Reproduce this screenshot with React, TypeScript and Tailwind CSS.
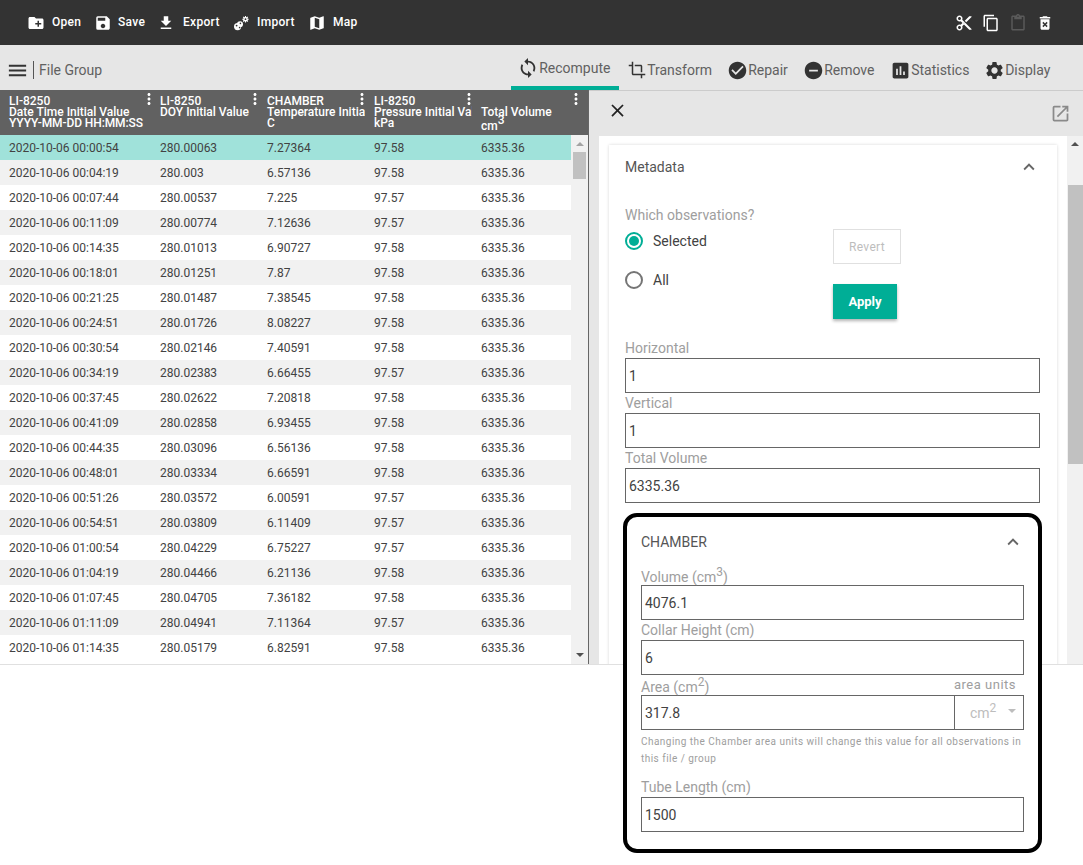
import type { ReactNode } from 'react';
import {
  MdAssessment,
  MdCheckCircle,
  MdClose,
  MdContentCopy,
  MdContentCut,
  MdCreateNewFolder,
  MdCrop,
  MdDeleteForever,
  MdExpandLess,
  MdFileDownload,
  MdMap,
  MdMenu,
  MdMoreVert,
  MdOpenInNew,
  MdOutlineContentPaste,
  MdRemoveCircle,
  MdSave,
  MdSettings,
  MdSync,
} from 'react-icons/md';

const rows = [
  ['2020-10-06 00:00:54', '280.00063', '7.27364', '97.58'],
  ['2020-10-06 00:04:19', '280.003', '6.57136', '97.58'],
  ['2020-10-06 00:07:44', '280.00537', '7.225', '97.57'],
  ['2020-10-06 00:11:09', '280.00774', '7.12636', '97.57'],
  ['2020-10-06 00:14:35', '280.01013', '6.90727', '97.58'],
  ['2020-10-06 00:18:01', '280.01251', '7.87', '97.58'],
  ['2020-10-06 00:21:25', '280.01487', '7.38545', '97.58'],
  ['2020-10-06 00:24:51', '280.01726', '8.08227', '97.58'],
  ['2020-10-06 00:30:54', '280.02146', '7.40591', '97.58'],
  ['2020-10-06 00:34:19', '280.02383', '6.66455', '97.57'],
  ['2020-10-06 00:37:45', '280.02622', '7.20818', '97.58'],
  ['2020-10-06 00:41:09', '280.02858', '6.93455', '97.58'],
  ['2020-10-06 00:44:35', '280.03096', '6.56136', '97.58'],
  ['2020-10-06 00:48:01', '280.03334', '6.66591', '97.58'],
  ['2020-10-06 00:51:26', '280.03572', '6.00591', '97.57'],
  ['2020-10-06 00:54:51', '280.03809', '6.11409', '97.57'],
  ['2020-10-06 01:00:54', '280.04229', '6.75227', '97.57'],
  ['2020-10-06 01:04:19', '280.04466', '6.21136', '97.58'],
  ['2020-10-06 01:07:45', '280.04705', '7.36182', '97.58'],
  ['2020-10-06 01:11:09', '280.04941', '7.11364', '97.57'],
  ['2020-10-06 01:14:35', '280.05179', '6.82591', '97.58'],
];

function ImportIcon() {
  return (
    <svg viewBox="0 0 16 16" className="h-4 w-4 fill-white">
      <circle cx="4.6" cy="11.6" r="3.6" />
      <circle cx="7" cy="9.2" r="3" />
      <circle cx="3.6" cy="10.6" r="0.9" className="fill-[#333333]" />
      <circle cx="6.6" cy="12.6" r="0.8" className="fill-[#333333]" />
      <circle cx="7.4" cy="8.4" r="0.8" className="fill-[#333333]" />
      <path d="M12.5 1v6.4M9.3 4.2h6.4M10.2 1.9l4.6 4.6M14.8 1.9l-4.6 4.6" className="stroke-white" strokeWidth="1.1" />
      <circle cx="12.5" cy="4.2" r="2.2" />
      <circle cx="12.5" cy="4.2" r="0.9" className="fill-[#333333]" />
    </svg>
  );
}

function TopAction({ icon, label, className }: { icon: ReactNode; label: string; className: string }) {
  return (
    <div className={`flex items-center ${className}`}>
      {icon}
      <span className="-translate-y-px text-xs font-medium tracking-[0.3px]">{label}</span>
    </div>
  );
}

function Tab({ icon, label, className }: { icon: ReactNode; label: string; className: string }) {
  return (
    <div className={`flex items-center ${className}`}>
      {icon}
      <span>{label}</span>
    </div>
  );
}

function HeaderCell({ lines, className, kebab }: { lines: ReactNode[]; className: string; kebab: string }) {
  return (
    <div className={`relative h-[45px] shrink-0 ${className}`}>
      <div className="h-full overflow-hidden pl-[9px] pt-[6px] text-xs font-medium leading-[11px] whitespace-nowrap">
        {lines.map((l, i) => (
          <div key={i}>{l}</div>
        ))}
      </div>
      <MdMoreVert className={`absolute top-0 h-[18px] w-[18px] ${kebab}`} />
    </div>
  );
}

function Field({ label, value, labelClass = '' }: { label: ReactNode; value: string; labelClass?: string }) {
  return (
    <div>
      <div className={`h-5 text-sm leading-5 whitespace-nowrap text-[#9e9e9e] ${labelClass}`}>{label}</div>
      <div className="flex h-[35px] items-center border border-[#666666] pl-[3px] text-sm text-[#424242]">{value}</div>
    </div>
  );
}

export default function App() {
  return (
    <div className="relative h-[865px] w-[1083px] overflow-hidden bg-white font-['Roboto',sans-serif]">
      {/* top bar */}
      <div className="flex h-[45px] items-center bg-[#333333] pl-[27px] pr-[29px] text-white">
        <TopAction className="w-[67px] gap-[7px]" icon={<MdCreateNewFolder className="h-[18px] w-[18px]" />} label="Open" />
        <TopAction className="w-[63px] gap-[6px]" icon={<MdSave className="h-[18px] w-[18px]" />} label="Save" />
        <TopAction className="w-[76px] gap-[8px]" icon={<MdFileDownload className="h-[18px] w-[18px]" />} label="Export" />
        <TopAction className="w-[75px] gap-[8px]" icon={<ImportIcon />} label="Import" />
        <TopAction className="gap-[7px]" icon={<MdMap className="h-[18px] w-[18px]" />} label="Map" />
        <div className="ml-auto flex items-center gap-[9px]">
          <MdContentCut className="h-[18px] w-[18px]" />
          <MdContentCopy className="h-[18px] w-[18px]" />
          <MdOutlineContentPaste className="h-[18px] w-[18px] text-[#5a5a5a]" />
          <MdDeleteForever className="h-[18px] w-[18px]" />
        </div>
      </div>

      {/* sub bar */}
      <div className="flex h-[45px] items-center bg-[#e6e6e6] pt-[5px] text-sm text-[#616161]">
        <MdMenu className="ml-[6px] h-[23px] w-[23px] text-[#333333]" />
        <div className="ml-[4px] h-[18px] w-px bg-[#555555]" />
        <span className="ml-[5px]">File Group</span>
        <div className="ml-[409px] flex h-full items-center">
          <Tab
            className="h-full w-[108px] border-b-4 border-[#00ae96] pl-[6px]"
            icon={<MdSync className="h-[22px] w-[22px] text-[#333333]" />}
            label="Recompute"
          />
          <Tab className="ml-[9px] w-[99px] gap-px" icon={<MdCrop className="h-[18px] w-[18px] text-[#333333]" />} label="Transform" />
          <Tab className="w-[76px]" icon={<MdCheckCircle className="h-[21px] w-[21px] text-[#333333]" />} label="Repair" />
          <Tab className="w-[87px]" icon={<MdRemoveCircle className="h-[21px] w-[21px] text-[#333333]" />} label="Remove" />
          <Tab className="w-[94px]" icon={<MdAssessment className="h-[21px] w-[21px] text-[#333333]" />} label="Statistics" />
          <Tab className="" icon={<MdSettings className="h-[21px] w-[21px] text-[#333333]" />} label="Display" />
        </div>
      </div>

      {/* main split */}
      <div className="flex h-[575px] border-b border-[#e0e0e0]">
        {/* table */}
        <div className="h-full w-[589px] shrink-0 border-r border-[#666666]">
          <div className="flex bg-[#616161] text-white">
            <HeaderCell
              className="w-[151px]"
              kebab="right-[-7px]"
              lines={['LI-8250', 'Date Time Initial Value', <span key="fmt" className="tracking-[-0.1px]">YYYY-MM-DD HH:MM:SS</span>]}
            />
            <HeaderCell className="w-[107px]" kebab="right-[-6px]" lines={['LI-8250', 'DOY Initial Value']} />
            <HeaderCell className="w-[107px]" kebab="right-[-6px]" lines={['CHAMBER', 'Temperature Initial Value', 'C']} />
            <HeaderCell className="w-[107px]" kebab="right-[-6px]" lines={['LI-8250', 'Pressure Initial Value', 'kPa']} />
            <HeaderCell
              className="flex-1 [&>div]:pt-[15px] [&>div]:leading-[14px]"
              kebab="right-[3px]"
              lines={['Total Volume', <span key="cm">cm<sup className="text-[12px] leading-none">3</sup></span>]}
            />
          </div>
          <div className="flex h-[529px]">
            <div className="w-[571px] shrink-0">
              {rows.map((r, i) => (
                <div
                  key={r[0]}
                  className={`flex h-[25px] items-center text-xs text-[#424242] ${
                    i === 0 ? 'bg-[#a0e2da]' : i % 2 === 1 ? 'bg-[#f1f1f1]' : 'bg-white'
                  }`}
                >
                  <div className="w-[151px] pl-[9px] whitespace-nowrap">{r[0]}</div>
                  <div className="w-[107px] pl-[9px]">{r[1]}</div>
                  <div className="w-[107px] pl-[9px]">{r[2]}</div>
                  <div className="w-[107px] pl-[9px]">{r[3]}</div>
                  <div className="pl-[9px]">6335.36</div>
                </div>
              ))}
            </div>
            <div className="relative flex-1 bg-[#f1f1f1]">
              <div className="absolute left-[5px] top-[7px] h-0 w-0 border-x-[4px] border-b-[4px] border-x-transparent border-b-[#a3a3a3]" />
              <div className="absolute left-[2px] top-[17px] h-[27px] w-[13px] bg-[#c1c1c1]" />
              <div className="absolute bottom-[7px] left-[5px] h-0 w-0 border-x-[4px] border-t-[4px] border-x-transparent border-t-[#505050]" />
            </div>
          </div>
        </div>

        {/* side panel */}
        <div className="flex min-w-0 flex-1 flex-col border-t border-[#cccccc] bg-[#e6e6e6]">
          <div className="flex h-[45px] shrink-0 items-start justify-between pl-[18px] pr-[12px]">
            <MdClose className="mt-[9px] h-[21px] w-[21px] text-[#222222]" />
            <MdOpenInNew className="mt-[12px] h-[21px] w-[21px] text-[#8a8a8a]" />
          </div>
          <div className="flex min-h-0 flex-1 pl-[10px]">
            <div className="min-w-0 flex-1 overflow-hidden bg-white px-[10px] pt-[9px]">
              <div className="bg-white pb-[200px] pl-[16px] pr-[17px] shadow-[0_0_3px_rgba(0,0,0,0.16)]">
                <div className="flex h-[44px] items-center justify-between text-sm text-[#555555]">
                  <span>Metadata</span>
                  <MdExpandLess className="mr-[0px] h-[22px] w-[22px] text-[#666666]" />
                </div>
                <div className="flex h-[149px]">
                  <div className="w-[208px] pt-[16px]">
                    <div className="text-sm leading-5 text-[#9e9e9e]">Which observations?</div>
                    <div className="mt-[6px] flex h-5 items-center gap-[10px] text-sm text-[#424242]">
                      <span className="flex h-[18px] w-[18px] items-center justify-center rounded-full border-2 border-[#00ae96]">
                        <span className="h-2.5 w-2.5 rounded-full bg-[#00ae96]" />
                      </span>
                      Selected
                    </div>
                    <div className="mt-[19px] flex h-5 items-center gap-[10px] text-sm text-[#424242]">
                      <span className="h-[18px] w-[18px] rounded-full border-2 border-[#757575]" />
                      All
                    </div>
                  </div>
                  <div className="pt-[40px]">
                    <div className="flex h-[35px] w-[68px] items-center justify-center border border-[#e0e0e0] text-xs tracking-[0.3px] text-[#bdbdbd]">Revert</div>
                    <div className="mt-[20px] flex h-[35px] w-[64px] items-center justify-center bg-[#00ae96] text-[13px] font-bold text-white shadow-[0_2px_3px_rgba(0,0,0,0.3)]">Apply</div>
                  </div>
                </div>
                <Field label="Horizontal" value="1" />
                <Field label="Vertical" value="1" />
                <Field label="Total Volume" value="6335.36" />
              </div>
            </div>
            <div className="relative w-[16px] shrink-0 bg-[#f1f1f1]">
              <div className="absolute left-[4px] top-[6px] h-0 w-0 border-x-[4px] border-b-[4px] border-x-transparent border-b-[#505050]" />
              <div className="absolute left-[1px] right-0 top-[49px] h-[279px] bg-[#c1c1c1]" />
            </div>
          </div>
        </div>
      </div>

      {/* chamber callout */}
      <div className="absolute left-[623px] top-[513px] h-[340px] w-[419px] rounded-[14px] border-4 border-black bg-white px-[14px]">
        <div className="flex h-[48px] items-center justify-between pt-[2px] text-sm text-[#555555]">
          <span>CHAMBER</span>
          <MdExpandLess className="mr-[0px] h-[22px] w-[22px] text-[#666666]" />
        </div>
        <Field
          labelClass="pt-[2px]"
          label={<>Volume (cm<sup className="text-[12px] leading-none">3</sup>)</>}
          value="4076.1"
        />
        <Field label="Collar Height (cm)" value="6" />
        <div className="flex h-5 justify-between text-sm leading-5 text-[#9e9e9e]">
          <span className="pt-[2px]">Area (cm<sup className="text-[12px] leading-none">2</sup>)</span>
          <span className="mr-[8px] text-[13px] tracking-[0.5px]">area units</span>
        </div>
        <div className="flex h-[35px] border border-[#666666] text-sm">
          <div className="flex flex-1 items-center pl-[3px] text-[#424242]">317.8</div>
          <div className="flex w-[69px] items-center border-l border-[#666666] pl-[15px] text-[#bdbdbd]">
            <span>cm<sup className="text-[12px] leading-none">2</sup></span>
            <span className="ml-[12px] h-0 w-0 -translate-y-[2px] border-x-[4px] border-t-[4px] border-x-transparent border-t-[#bdbdbd]" />
          </div>
        </div>
        <p className="mt-[3px] text-[10px] leading-[17px] tracking-[0.47px] text-[#9e9e9e]">
          Changing the Chamber area units will change this value for all observations in this file / group
        </p>
        <div className="mt-[10px]">
          <Field label="Tube Length (cm)" value="1500" />
        </div>
      </div>
    </div>
  );
}
